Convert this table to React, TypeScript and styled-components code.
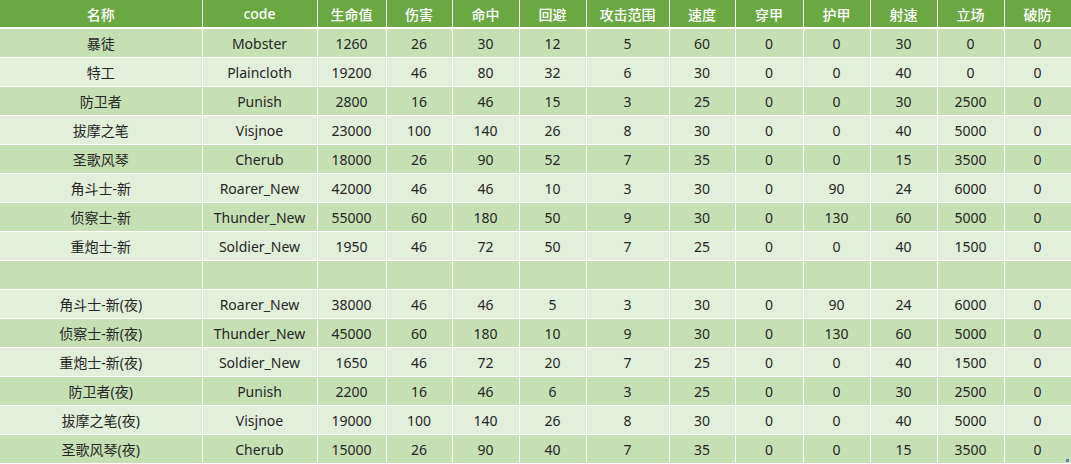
import React from "react";
import styled, { createGlobalStyle } from "styled-components";

const GlobalStyle = createGlobalStyle`
  html, body {
    margin: 0;
    padding: 0;
    background: #ffffff;
    overflow: hidden;
  }
`;

const columns = [
  { key: "name", title: "名称", width: 202 },
  { key: "code", title: "code", width: 115 },
  { key: "hp", title: "生命值", width: 69 },
  { key: "dmg", title: "伤害", width: 66 },
  { key: "hit", title: "命中", width: 67 },
  { key: "dodge", title: "回避", width: 67 },
  { key: "range", title: "攻击范围", width: 83 },
  { key: "speed", title: "速度", width: 66 },
  { key: "pierce", title: "穿甲", width: 68 },
  { key: "armor", title: "护甲", width: 67 },
  { key: "rate", title: "射速", width: 67 },
  { key: "field", title: "立场", width: 67 },
  { key: "breach", title: "破防", width: 67 },
];

const rows: (string | number)[][] = [
  ["暴徒", "Mobster", 1260, 26, 30, 12, 5, 60, 0, 0, 30, 0, 0],
  ["特工", "Plaincloth", 19200, 46, 80, 32, 6, 30, 0, 0, 40, 0, 0],
  ["防卫者", "Punish", 2800, 16, 46, 15, 3, 25, 0, 0, 30, 2500, 0],
  ["拔摩之笔", "Visjnoe", 23000, 100, 140, 26, 8, 30, 0, 0, 40, 5000, 0],
  ["圣歌风琴", "Cherub", 18000, 26, 90, 52, 7, 35, 0, 0, 15, 3500, 0],
  ["角斗士-新", "Roarer_New", 42000, 46, 46, 10, 3, 30, 0, 90, 24, 6000, 0],
  ["侦察士-新", "Thunder_New", 55000, 60, 180, 50, 9, 30, 0, 130, 60, 5000, 0],
  ["重炮士-新", "Soldier_New", 1950, 46, 72, 50, 7, 25, 0, 0, 40, 1500, 0],
  ["", "", "", "", "", "", "", "", "", "", "", "", ""],
  ["角斗士-新(夜)", "Roarer_New", 38000, 46, 46, 5, 3, 30, 0, 90, 24, 6000, 0],
  ["侦察士-新(夜)", "Thunder_New", 45000, 60, 180, 10, 9, 30, 0, 130, 60, 5000, 0],
  ["重炮士-新(夜)", "Soldier_New", 1650, 46, 72, 20, 7, 25, 0, 0, 40, 1500, 0],
  ["防卫者(夜)", "Punish", 2200, 16, 46, 6, 3, 25, 0, 0, 30, 2500, 0],
  ["拔摩之笔(夜)", "Visjnoe", 19000, 100, 140, 26, 8, 30, 0, 0, 40, 5000, 0],
  ["圣歌风琴(夜)", "Cherub", 15000, 26, 90, 40, 7, 35, 0, 0, 15, 3500, 0],
];

const Sheet = styled.div`
  position: relative;
  width: 1071px;
  height: 464px;
  overflow: hidden;
  background: #e2efda;
`;

const Table = styled.table`
  border-collapse: collapse;
  table-layout: fixed;
  width: 1071px;
  font-family: "Noto Sans", "Noto Sans CJK SC", sans-serif;
  font-size: 14px;
`;

const HeadCell = styled.th`
  height: 27px;
  padding: 0;
  background: #6aa842;
  color: #ffffff;
  font-weight: 500;
  text-align: center;
  vertical-align: middle;
  border-right: 1px solid #ffffff;
  border-bottom: 2px solid #ffffff;
  white-space: nowrap;
`;

const Row = styled.tr<{ $shade: boolean }>`
  background: ${(p) => (p.$shade ? "#c6e0b4" : "#e2efda")};
`;

const Cell = styled.td`
  height: 28px;
  padding: 0;
  color: #262626;
  text-align: center;
  vertical-align: middle;
  border-right: 1px solid #ffffff;
  border-bottom: 1px solid #ffffff;
  white-space: nowrap;
  overflow: hidden;
`;

const Handle = styled.div`
  position: absolute;
  right: 2px;
  bottom: 2px;
  width: 3px;
  height: 3px;
  background: #5b7fb8;
`;

const App = () => {
  return (
    <Sheet>
      <GlobalStyle />
      <Table>
        <colgroup>
          {columns.map((c) => (
            <col key={c.key} style={{ width: c.width }} />
          ))}
        </colgroup>
        <thead>
          <tr>
            {columns.map((c) => (
              <HeadCell key={c.key}>{c.title}</HeadCell>
            ))}
          </tr>
        </thead>
        <tbody>
          {rows.map((r, i) => (
            <Row key={i} $shade={i % 2 === 0}>
              {r.map((v, j) => (
                <Cell key={j}>{v}</Cell>
              ))}
            </Row>
          ))}
        </tbody>
      </Table>
      <Handle />
    </Sheet>
  );
};

export default App;
